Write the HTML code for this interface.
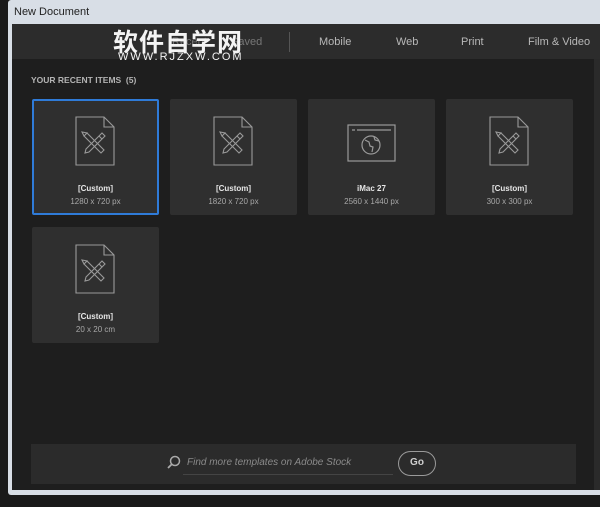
<!DOCTYPE html>
<html><head><meta charset="utf-8"><style>
*{margin:0;padding:0;box-sizing:border-box}
body{width:600px;height:507px;background:#1a1a1a;position:relative;overflow:hidden;font-family:"Liberation Sans","Noto Sans CJK SC",sans-serif}
.abs{position:absolute}
.frame{left:8px;top:0;width:600px;height:495px;background:#d8dee6;border-radius:3px}
.title{left:14px;top:6px;font-size:11px;color:#222}
.tabs{left:12px;top:24px;width:588px;height:35px;background:#2c2c2c}
.content{left:12px;top:59px;width:582px;height:431px;background:#1e1e1e}
.rstrip{left:594px;top:59px;width:6px;height:431px;background:#2a2a2a}
.tab{top:36px;font-size:11px;color:#b8b8b8}
.card{width:127px;height:116px;background:#2f2f2f;border-radius:2px}
.card.sel{border:2px solid #2f7bd8}
.card svg{position:absolute;left:0;top:0}
.n{position:absolute;width:100%;text-align:center;top:85px;font-size:8px;color:#e6e6e6;font-weight:bold}
.s{position:absolute;width:100%;text-align:center;top:98px;font-size:8px;color:#a8a8a8}
.hdr{left:31px;top:75px;font-size:8.5px;font-weight:bold;color:#b4b4b4}
.search{left:31px;top:444px;width:545px;height:40px;background:#2b2b2b}
.go{left:398px;top:451px;width:38px;height:25px;border:1.5px solid #9a9a9a;border-radius:13px;color:#d0d0d0;font-size:10px;font-weight:bold;text-align:center;line-height:22px}
.wm{left:113px;top:23px;font-size:25px;font-weight:bold;color:#f4f4f4;letter-spacing:1px}
.wm2{left:118px;top:51px;font-size:11px;color:#f4f4f4;letter-spacing:2px}
</style></head><body>
<div class="abs frame"></div>
<div class="abs title">New Document</div>
<div class="abs tabs"></div>
<div class="abs content"></div>
<div class="abs rstrip"></div>
<div class="abs" style="left:289px;top:32px;width:1px;height:20px;background:#555"></div>
<div class="abs tab" style="left:172px;color:#777">Recent</div>
<div class="abs tab" style="left:231px;color:#777">Saved</div>
<div class="abs tab" style="left:319px">Mobile</div>
<div class="abs tab" style="left:396px">Web</div>
<div class="abs tab" style="left:461px">Print</div>
<div class="abs tab" style="left:528px">Film &amp; Video</div>
<div class="abs wm">软件自学网</div>
<div class="abs wm2">WWW.RJZXW.COM</div>
<div class="abs hdr">YOUR RECENT ITEMS &nbsp;(5)</div>

<svg width="0" height="0" style="position:absolute"><defs>
<g id="doc" fill="none" stroke="#9a9a9a" stroke-width="1.1"><path d="M44 18h28l10 10v38H44z M72 18v10h10"/>
<path d="M52 37l3-3 17 17-3 3z M52 37l3-3-5-1z"/>
<path d="M70 34l3 3-16 16-4 1 1-4z M67 37l3 3"/></g>
</defs></svg>

<div class="abs card sel" style="left:32px;top:99px"><svg width="127" height="116" style="left:-2px;top:-2px"><use href="#doc"/></svg><div class="n" style="top:83px">[Custom]</div><div class="s" style="top:96px">1280 x 720 px</div></div>
<div class="abs card" style="left:170px;top:99px"><svg width="127" height="116"><use href="#doc"/></svg><div class="n">[Custom]</div><div class="s">1820 x 720 px</div></div>
<div class="abs card" style="left:308px;top:99px"><svg width="127" height="116"><g fill="none" stroke="#9a9a9a" stroke-width="1.2"><rect x="40" y="26" width="47" height="36"/><path d="M44 31h3M49 31h34"/><circle cx="63" cy="46" r="9"/><path d="M57 41l4 2 1 4 3 1-1 5M66 38l1 3 4 1"/></g></svg><div class="n">iMac 27</div><div class="s">2560 x 1440 px</div></div>
<div class="abs card" style="left:446px;top:99px"><svg width="127" height="116"><use href="#doc"/></svg><div class="n">[Custom]</div><div class="s">300 x 300 px</div></div>
<div class="abs card" style="left:32px;top:227px"><svg width="127" height="116"><use href="#doc"/></svg><div class="n">[Custom]</div><div class="s">20 x 20 cm</div></div>

<div class="abs search"></div>
<svg class="abs" style="left:166px;top:455px" width="16" height="16"><circle cx="9" cy="6" r="4.5" fill="none" stroke="#aaa" stroke-width="1.5"/><path d="M6 9l-4 4" stroke="#aaa" stroke-width="1.8"/></svg>
<div class="abs" style="left:187px;top:457px;font-size:10px;font-style:italic;color:#8a8a8a">Find more templates on Adobe Stock</div>
<div class="abs" style="left:183px;top:474px;width:210px;height:1px;background:#444"></div>
<div class="abs go">Go</div>
</body></html>
